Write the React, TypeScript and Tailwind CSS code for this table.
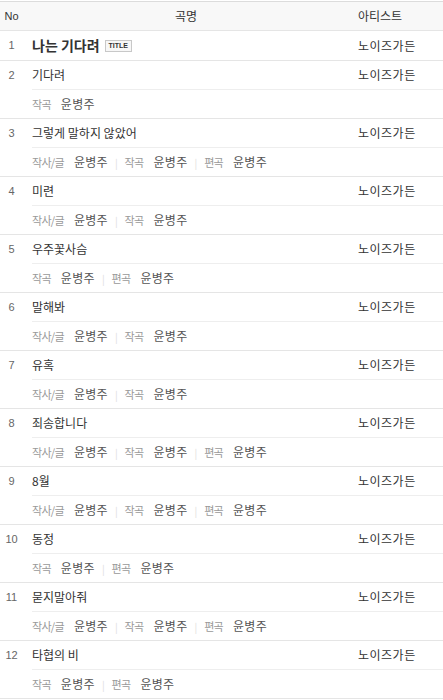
type Credit = { role: string; name: string };
type Song = { no: number; title: string; artist: string; isTitle?: boolean; credits?: Credit[] };

const F = (role: string): Credit => ({ role, name: '윤병주' });

const songs: Song[] = [
  { no: 1, title: '나는 기다려', artist: '노이즈가든', isTitle: true },
  { no: 2, title: '기다려', artist: '노이즈가든', credits: [F('작곡')] },
  { no: 3, title: '그렇게 말하지 않았어', artist: '노이즈가든', credits: [F('작사/글'), F('작곡'), F('편곡')] },
  { no: 4, title: '미련', artist: '노이즈가든', credits: [F('작사/글'), F('작곡')] },
  { no: 5, title: '우주꽃사슴', artist: '노이즈가든', credits: [F('작곡'), F('편곡')] },
  { no: 6, title: '말해봐', artist: '노이즈가든', credits: [F('작사/글'), F('작곡')] },
  { no: 7, title: '유혹', artist: '노이즈가든', credits: [F('작사/글'), F('작곡')] },
  { no: 8, title: '죄송합니다', artist: '노이즈가든', credits: [F('작사/글'), F('작곡'), F('편곡')] },
  { no: 9, title: '8월', artist: '노이즈가든', credits: [F('작사/글'), F('작곡'), F('편곡')] },
  { no: 10, title: '동정', artist: '노이즈가든', credits: [F('작곡'), F('편곡')] },
  { no: 11, title: '묻지말아줘', artist: '노이즈가든', credits: [F('작사/글'), F('작곡'), F('편곡')] },
  { no: 12, title: '타협의 비', artist: '노이즈가든', credits: [F('작곡'), F('편곡')] },
];

const font = { fontFamily: '"Noto Sans CJK KR", "Noto Sans", sans-serif' };

function SongRow({ song }: { song: Song }) {
  return (
    <div className="flex border-b border-[#e5e5e5]">
      <div className="w-[32px] shrink-0 h-[29px] flex items-center">
        <span className="w-[23px] text-center text-[11px] text-[#666] font-['Liberation_Sans',sans-serif]">
          {song.no}
        </span>
      </div>
      <div className="flex-1 min-w-0">
        <div className={`flex h-[29px] items-center ${song.credits ? 'border-b border-[#eee]' : ''}`}>
          <div className="flex-1 flex items-center gap-[5px] min-w-0">
            {song.isTitle ? (
              <>
                <span className="text-[14px] font-bold text-[#333]">{song.title}</span>
                <span className="border border-[#c8c8c8] bg-[#f7f7f7] px-[3px] h-[12px] leading-[10px] text-[7px] font-bold text-[#333] font-['Liberation_Sans',sans-serif]">
                  TITLE
                </span>
              </>
            ) : (
              <span className="text-[12px] text-[#333]">{song.title}</span>
            )}
          </div>
          <div className="w-[85px] shrink-0 text-[12px] tracking-[0.5px] text-[#333]">{song.artist}</div>
        </div>
        {song.credits && (
          <div className="h-[28px] flex items-center">
            {song.credits.map((c, i) => (
              <span key={i} className="flex items-center">
                {i > 0 && <span className="mx-[7px] text-[10px] text-[#ddd]">|</span>}
                <span className="text-[11px] tracking-[-0.7px] text-[#999]">{c.role}</span>
                <span className="ml-[10px] text-[12px] tracking-[0.3px] text-[#555]">{c.name}</span>
              </span>
            ))}
          </div>
        )}
      </div>
    </div>
  );
}

export default function App() {
  return (
    <div className="w-[443px] bg-white pt-px" style={font}>
      <div className="flex h-[30px] items-center bg-[#f8f8f8] border-y border-[#dcdcdc] border-b-[#e5e5e5] text-[12px] text-[#333]">
        <div className="w-[32px] shrink-0">
          <span className="block w-[23px] text-center font-['Liberation_Sans',sans-serif] text-[11px]">No</span>
        </div>
        <div className="flex-1 text-center pr-[18px]">곡명</div>
        <div className="w-[85px] shrink-0">아티스트</div>
      </div>
      {songs.map((s) => (
        <SongRow key={s.no} song={s} />
      ))}
    </div>
  );
}
